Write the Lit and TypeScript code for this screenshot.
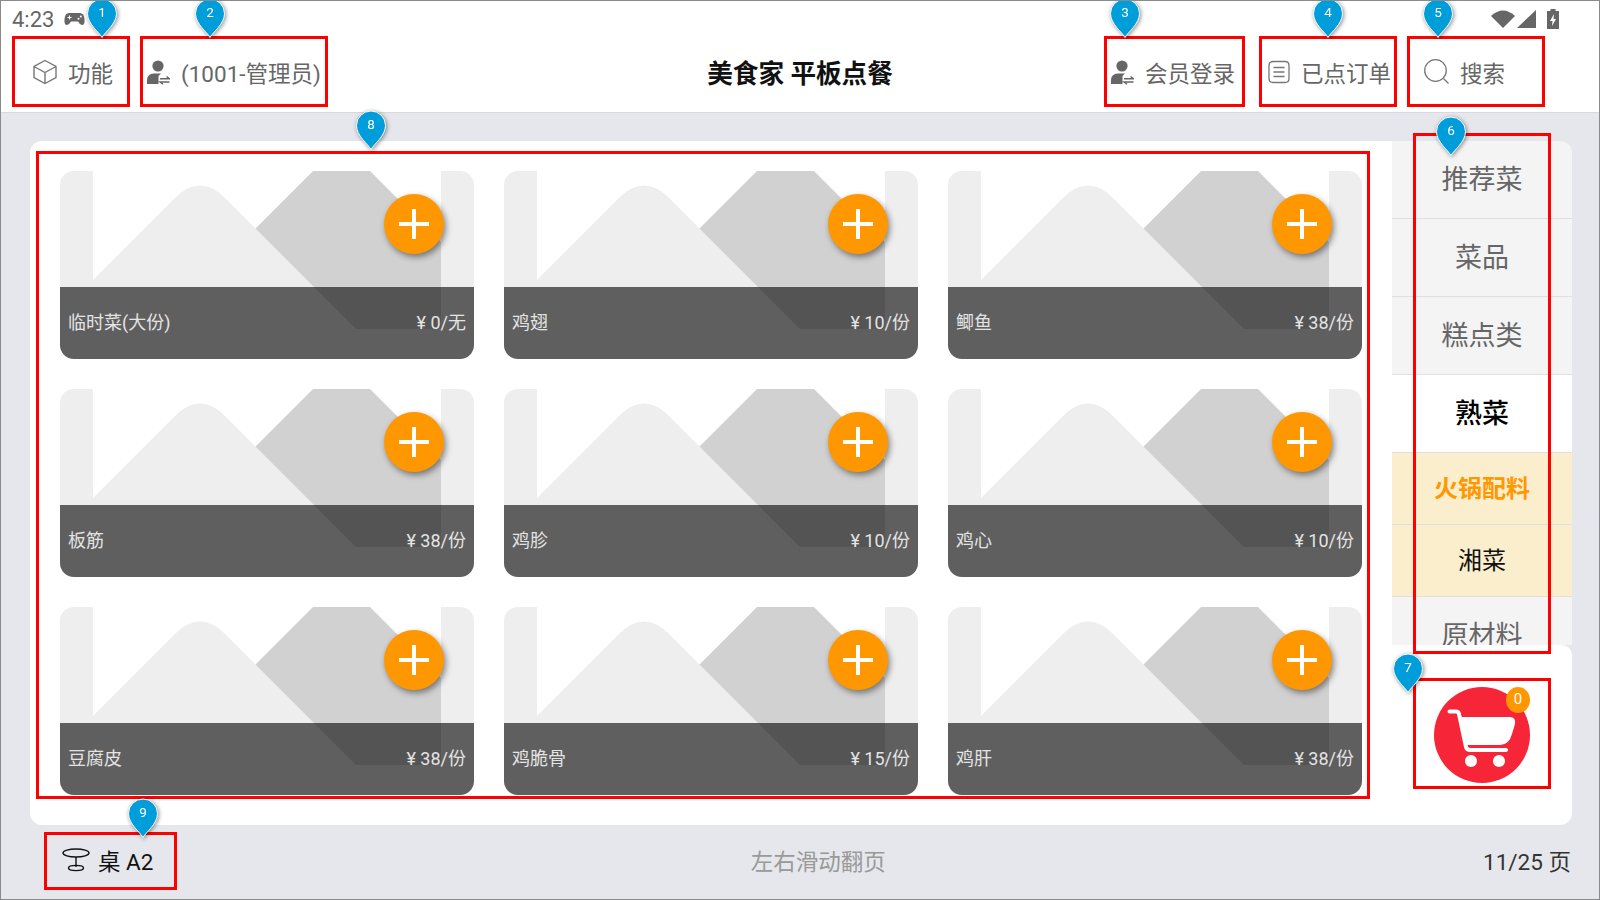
import { LitElement, html, css, svg } from "lit";
import { customElement } from "lit/decorators.js";

interface Dish {
  name: string;
  price: string;
}

interface Category {
  label: string;
  kind?: string;
}

const DISHES: Dish[] = [
  { name: "临时菜(大份)", price: "¥ 0/无" },
  { name: "鸡翅", price: "¥ 10/份" },
  { name: "鲫鱼", price: "¥ 38/份" },
  { name: "板筋", price: "¥ 38/份" },
  { name: "鸡胗", price: "¥ 10/份" },
  { name: "鸡心", price: "¥ 10/份" },
  { name: "豆腐皮", price: "¥ 38/份" },
  { name: "鸡脆骨", price: "¥ 15/份" },
  { name: "鸡肝", price: "¥ 38/份" },
];

const CATEGORIES: Category[] = [
  { label: "推荐菜" },
  { label: "菜品" },
  { label: "糕点类" },
  { label: "熟菜", kind: "current" },
  { label: "火锅配料", kind: "hot" },
  { label: "湘菜", kind: "warm" },
  { label: "原材料" },
];

// red annotation frames: x, y, w, h
const FRAMES = [
  [12, 36, 118, 71],
  [140, 36, 188, 71],
  [1104, 36, 141, 71],
  [1259, 36, 138, 71],
  [1407, 36, 138, 71],
  [1413, 133, 138, 521],
  [1413, 678, 138, 111],
  [36, 151, 1334, 648],
  [44, 832, 133, 58],
];

// numbered pins: label, tip x, tip y
const PINS = [
  [1, 102, 38],
  [2, 210, 38],
  [3, 1125, 38],
  [4, 1328, 38],
  [5, 1438, 38],
  [6, 1451, 156],
  [7, 1408, 693],
  [8, 371, 150],
  [9, 143, 838],
];

const personIcon = html`<svg class="icon" width="24" height="26" viewBox="0 0 24 26">
  <circle cx="12" cy="7" r="5.6" fill="#666"></circle>
  <path d="M1 25 V21 Q1 15 8 14.5 H15 L12.5 17 V25 Z" fill="#666"></path>
  <path d="M14 19.8 H23.5 L20.5 17.5 M23.5 23 H14 L17 25.3" stroke="#666" stroke-width="1.4" fill="none"></path>
</svg>`;

@customElement("app-root")
export class AppRoot extends LitElement {
  static styles = css`
    :host {
      display: flex;
      flex-direction: column;
      position: relative;
      box-sizing: border-box;
      width: 1600px;
      height: 900px;
      overflow: hidden;
      border: 1px solid #8a8a8a;
      background: #e6e7ec;
      font-family: Roboto, "Noto Sans CJK SC", sans-serif;
      color: #666;
    }

    header {
      flex: none;
      height: 112px;
      box-sizing: border-box;
      background: #fff;
      border-bottom: 1px solid #d8d9dd;
    }

    .status {
      display: flex;
      align-items: center;
      height: 36px;
      padding: 0 40px 0 11px;
    }

    .time {
      font-size: 22px;
      margin-right: 10px;
    }

    .status-right {
      display: flex;
      align-items: center;
      gap: 2px;
      margin-left: auto;
    }

    .battery {
      margin-left: 9px;
    }

    .toolbar {
      display: grid;
      grid-template-columns: 1fr auto 1fr;
      align-items: center;
      height: 72px;
      padding-bottom: 3px;
      box-sizing: border-box;
    }

    .group {
      display: flex;
      align-items: center;
      gap: 33px;
      padding-left: 32px;
    }

    .group.right {
      justify-content: flex-end;
      padding: 0 94px 0 0;
    }

    .action {
      display: flex;
      align-items: center;
      gap: 11px;
      font-size: 22.5px;
      white-space: nowrap;
    }

    .title {
      font-size: 25.6px;
      font-weight: 700;
      color: #111;
      white-space: nowrap;
      padding-bottom: 1px;
    }

    main {
      flex: none;
      display: flex;
      height: 684px;
      margin: 28px 27px 0 29px;
    }

    .dishes {
      display: grid;
      grid-template-columns: repeat(3, 414px);
      grid-auto-rows: 188px;
      gap: 30px;
      width: 1362px;
      box-sizing: border-box;
      padding: 30px;
      background: #fff;
      border-radius: 12px 0 0 12px;
    }

    .card {
      position: relative;
      display: flex;
      flex-direction: column;
      justify-content: flex-end;
      overflow: hidden;
      border-radius: 14px;
    }

    .card .photo {
      position: absolute;
      inset: 0;
    }

    .band {
      position: relative;
      display: flex;
      align-items: center;
      justify-content: space-between;
      box-sizing: border-box;
      height: 72px;
      padding: 0 8px 4px;
      background: rgba(0, 0, 0, 0.6);
      color: #e4e4e4;
      font-size: 18px;
    }

    .add {
      position: absolute;
      top: 23px;
      left: 324px;
      width: 60px;
      height: 60px;
      border-radius: 50%;
      background: #ff9800;
      box-shadow: 2px 3px 6px rgba(0, 0, 0, 0.45);
    }

    .add::before,
    .add::after {
      content: "";
      position: absolute;
      background: #fff;
    }

    .add::before {
      left: 15px;
      top: 28px;
      width: 30px;
      height: 4px;
    }

    .add::after {
      left: 28px;
      top: 15px;
      width: 4px;
      height: 30px;
    }

    .side {
      display: flex;
      flex-direction: column;
      width: 180px;
    }

    .cats {
      flex: none;
      height: 504px;
      overflow: hidden;
      background: #f4f4f5;
      border-radius: 0 12px 0 0;
    }

    .cat {
      display: flex;
      align-items: center;
      justify-content: center;
      box-sizing: border-box;
      height: 78px;
      padding-bottom: 4px;
      border-bottom: 1px solid #dedfe1;
      font-size: 27px;
    }

    .cat.current {
      background: #fff;
      color: #000;
      font-weight: 500;
    }

    .cat.hot,
    .cat.warm {
      height: 72px;
      background: #fbeecd;
      font-size: 24px;
    }

    .cat.hot {
      color: #ff9800;
      font-weight: 700;
    }

    .cat.warm {
      color: #111;
    }

    .cart-area {
      flex: 1;
      display: flex;
      justify-content: center;
      padding-top: 42px;
      background: #fff;
      border-radius: 0 10px 12px 0;
    }

    .cart {
      position: relative;
      width: 96px;
      height: 96px;
      border-radius: 50%;
      background: #f62537;
    }

    .badge {
      position: absolute;
      top: 0;
      left: 72px;
      width: 24px;
      height: 26px;
      line-height: 25px;
      text-align: center;
      border-radius: 50%;
      background: #ff9800;
      color: #fff;
      font-size: 15px;
    }

    footer {
      flex: 1;
      display: flex;
      align-items: center;
      justify-content: space-between;
      padding: 0 28px 4px 61px;
      font-size: 22.5px;
    }

    .table {
      display: flex;
      align-items: center;
      gap: 8px;
      color: #111;
    }

    .hint {
      color: #999;
    }

    .pages {
      color: #333;
    }

    .frame {
      position: absolute;
      box-sizing: border-box;
      border: 3px solid #f00;
    }

    .pin {
      position: absolute;
      width: 32px;
      height: 41px;
      filter: drop-shadow(1px 1px 2px rgba(0, 0, 0, 0.45));
    }

    .pin svg {
      display: block;
    }

    .pin span {
      position: absolute;
      left: 0;
      top: 7px;
      width: 32px;
      line-height: 15px;
      text-align: center;
      color: #fff;
      font-size: 13.5px;
    }
  `;

  private renderPhoto() {
    return html`<svg class="photo" width="414" height="188" viewBox="0 0 414 188">
      <rect width="414" height="188" fill="#eee"></rect>
      <rect x="33" width="348" height="116" fill="#fff"></rect>
      <path d="M253 0 H310 L381 71 V155 Q381 158 378 158 H290 L195 58 Z" fill="#d1d1d1"></path>
      <path d="M33 109 L115 27 Q140 2 165 27 L296 158 H33 Z" fill="#eee"></path>
    </svg>`;
  }

  private renderCard(dish: Dish) {
    return html`
      <div class="card">
        ${this.renderPhoto()}
        <div class="add"></div>
        <div class="band">
          <span>${dish.name}</span>
          <span>${dish.price}</span>
        </div>
      </div>
    `;
  }

  private renderCartIcon() {
    return svg`<svg width="96" height="96" viewBox="0 0 96 96">
      <path d="M26 30 H76 Q82 30 81 37 L78 47 Q75 58 66 58 H31 Z" fill="#fff"></path>
      <path d="M15.5 24.5 H22 Q24.5 24.5 25 27 L32 60 Q33 63 36 63 H72" fill="none" stroke="#fff" stroke-width="4" stroke-linecap="round"></path>
      <circle cx="37" cy="74" r="6" fill="#fff"></circle>
      <circle cx="65" cy="74" r="6" fill="#fff"></circle>
    </svg>`;
  }

  render() {
    return html`
      <header>
        <div class="status">
          <span class="time">4:23</span>
          <svg width="21" height="14" viewBox="0 0 21 14">
            <path d="M5 1 H16 Q20 1 20.5 7 Q21 13 18 13 Q16 13 14 9.5 H7 Q5 13 3 13 Q0 13 .5 7 Q1 1 5 1 Z" fill="#666"></path>
            <path d="M5.5 3.5 V7.5 M3.5 5.5 H7.5" stroke="#fff" stroke-width="1.1"></path>
            <circle cx="14.5" cy="6.8" r="1" fill="#fff"></circle>
            <circle cx="16.8" cy="4.6" r="1" fill="#fff"></circle>
          </svg>
          <div class="status-right">
            <svg width="24" height="18" viewBox="0 0 24 18"><path d="M0 6 Q12 -5 24 6 L12 18 Z" fill="#666"></path></svg>
            <svg width="19" height="18" viewBox="0 0 19 18"><path d="M19 0 V18 H0 Z" fill="#666"></path></svg>
            <svg class="battery" width="12" height="20" viewBox="0 0 12 20">
              <path d="M3.5 0 H8.5 V2 H12 V20 H0 V2 H3.5 Z" fill="#666"></path>
              <path d="M7 5 L3 12 H5.5 L5 17 L9 10 H6.5 Z" fill="#fff"></path>
            </svg>
          </div>
        </div>
        <div class="toolbar">
          <div class="group">
            <div class="action">
              <svg class="icon" width="24" height="26" viewBox="0 0 24 26" fill="none" stroke="#777" stroke-width="1.4">
                <path d="M12 1.5 L23 7.5 V18.5 L12 24.5 L1 18.5 V7.5 Z M1 7.5 L12 13.5 L23 7.5 M12 13.5 V24.5"></path>
              </svg>
              <span>功能</span>
            </div>
            <div class="action">${personIcon}<span>(1001-管理员)</span></div>
          </div>
          <div class="title">美食家 平板点餐</div>
          <div class="group right">
            <div class="action">${personIcon}<span>会员登录</span></div>
            <div class="action">
              <svg class="icon" width="22" height="24" viewBox="0 0 22 24" fill="none" stroke="#777" stroke-width="1.3">
                <path d="M5 1.5 H17 Q21 1.5 21 5.5 V18.5 Q21 22.5 17 22.5 H5 Q1 22.5 1 18.5 V5.5 Q1 1.5 5 1.5 Z"></path>
                <path d="M5.5 7.5 H16.5 M5.5 12 H16.5 M5.5 16.5 H16.5"></path>
              </svg>
              <span>已点订单</span>
            </div>
            <div class="action">
              <svg class="icon" width="25" height="25" viewBox="0 0 25 25" fill="none" stroke="#777" stroke-width="1.3">
                <circle cx="11.5" cy="11.5" r="10.8"></circle>
                <path d="M19.5 19.5 L24.5 24.5"></path>
              </svg>
              <span>搜索</span>
            </div>
          </div>
        </div>
      </header>

      <main>
        <section class="dishes">${DISHES.map((d) => this.renderCard(d))}</section>
        <aside class="side">
          <div class="cats">
            ${CATEGORIES.map((c) => html`<div class="cat ${c.kind ?? ""}">${c.label}</div>`)}
          </div>
          <div class="cart-area">
            <div class="cart">
              ${this.renderCartIcon()}
              <span class="badge">0</span>
            </div>
          </div>
        </aside>
      </main>

      <footer>
        <div class="table">
          <svg width="28" height="24" viewBox="0 0 28 24" fill="none" stroke="#111" stroke-width="1.4">
            <ellipse cx="14" cy="5" rx="13" ry="4"></ellipse>
            <path d="M14 9 V19"></path>
            <ellipse cx="14" cy="20" rx="7.5" ry="2.6"></ellipse>
          </svg>
          <span>桌 A2</span>
        </div>
        <span class="hint">左右滑动翻页</span>
        <span class="pages">11/25 页</span>
      </footer>

      ${FRAMES.map(
        ([x, y, w, h]) =>
          html`<div class="frame" style="left:${x - 1}px;top:${y - 1}px;width:${w}px;height:${h}px"></div>`
      )}
      ${PINS.map(
        ([n, x, y]) => html`
          <div class="pin" style="left:${x - 17}px;top:${y - 41}px">
            <svg width="32" height="41" viewBox="0 0 32 41">
              <path d="M16 39.5 C13 34 1.5 26 1.5 15.5 A14.5 14.5 0 0 1 30.5 15.5 C30.5 26 19 34 16 39.5 Z" fill="#009ddb" stroke="#fff" stroke-width="1"></path>
            </svg>
            <span>${n}</span>
          </div>
        `
      )}
    `;
  }
}

declare global {
  interface HTMLElementTagNameMap {
    "app-root": AppRoot;
  }
}
